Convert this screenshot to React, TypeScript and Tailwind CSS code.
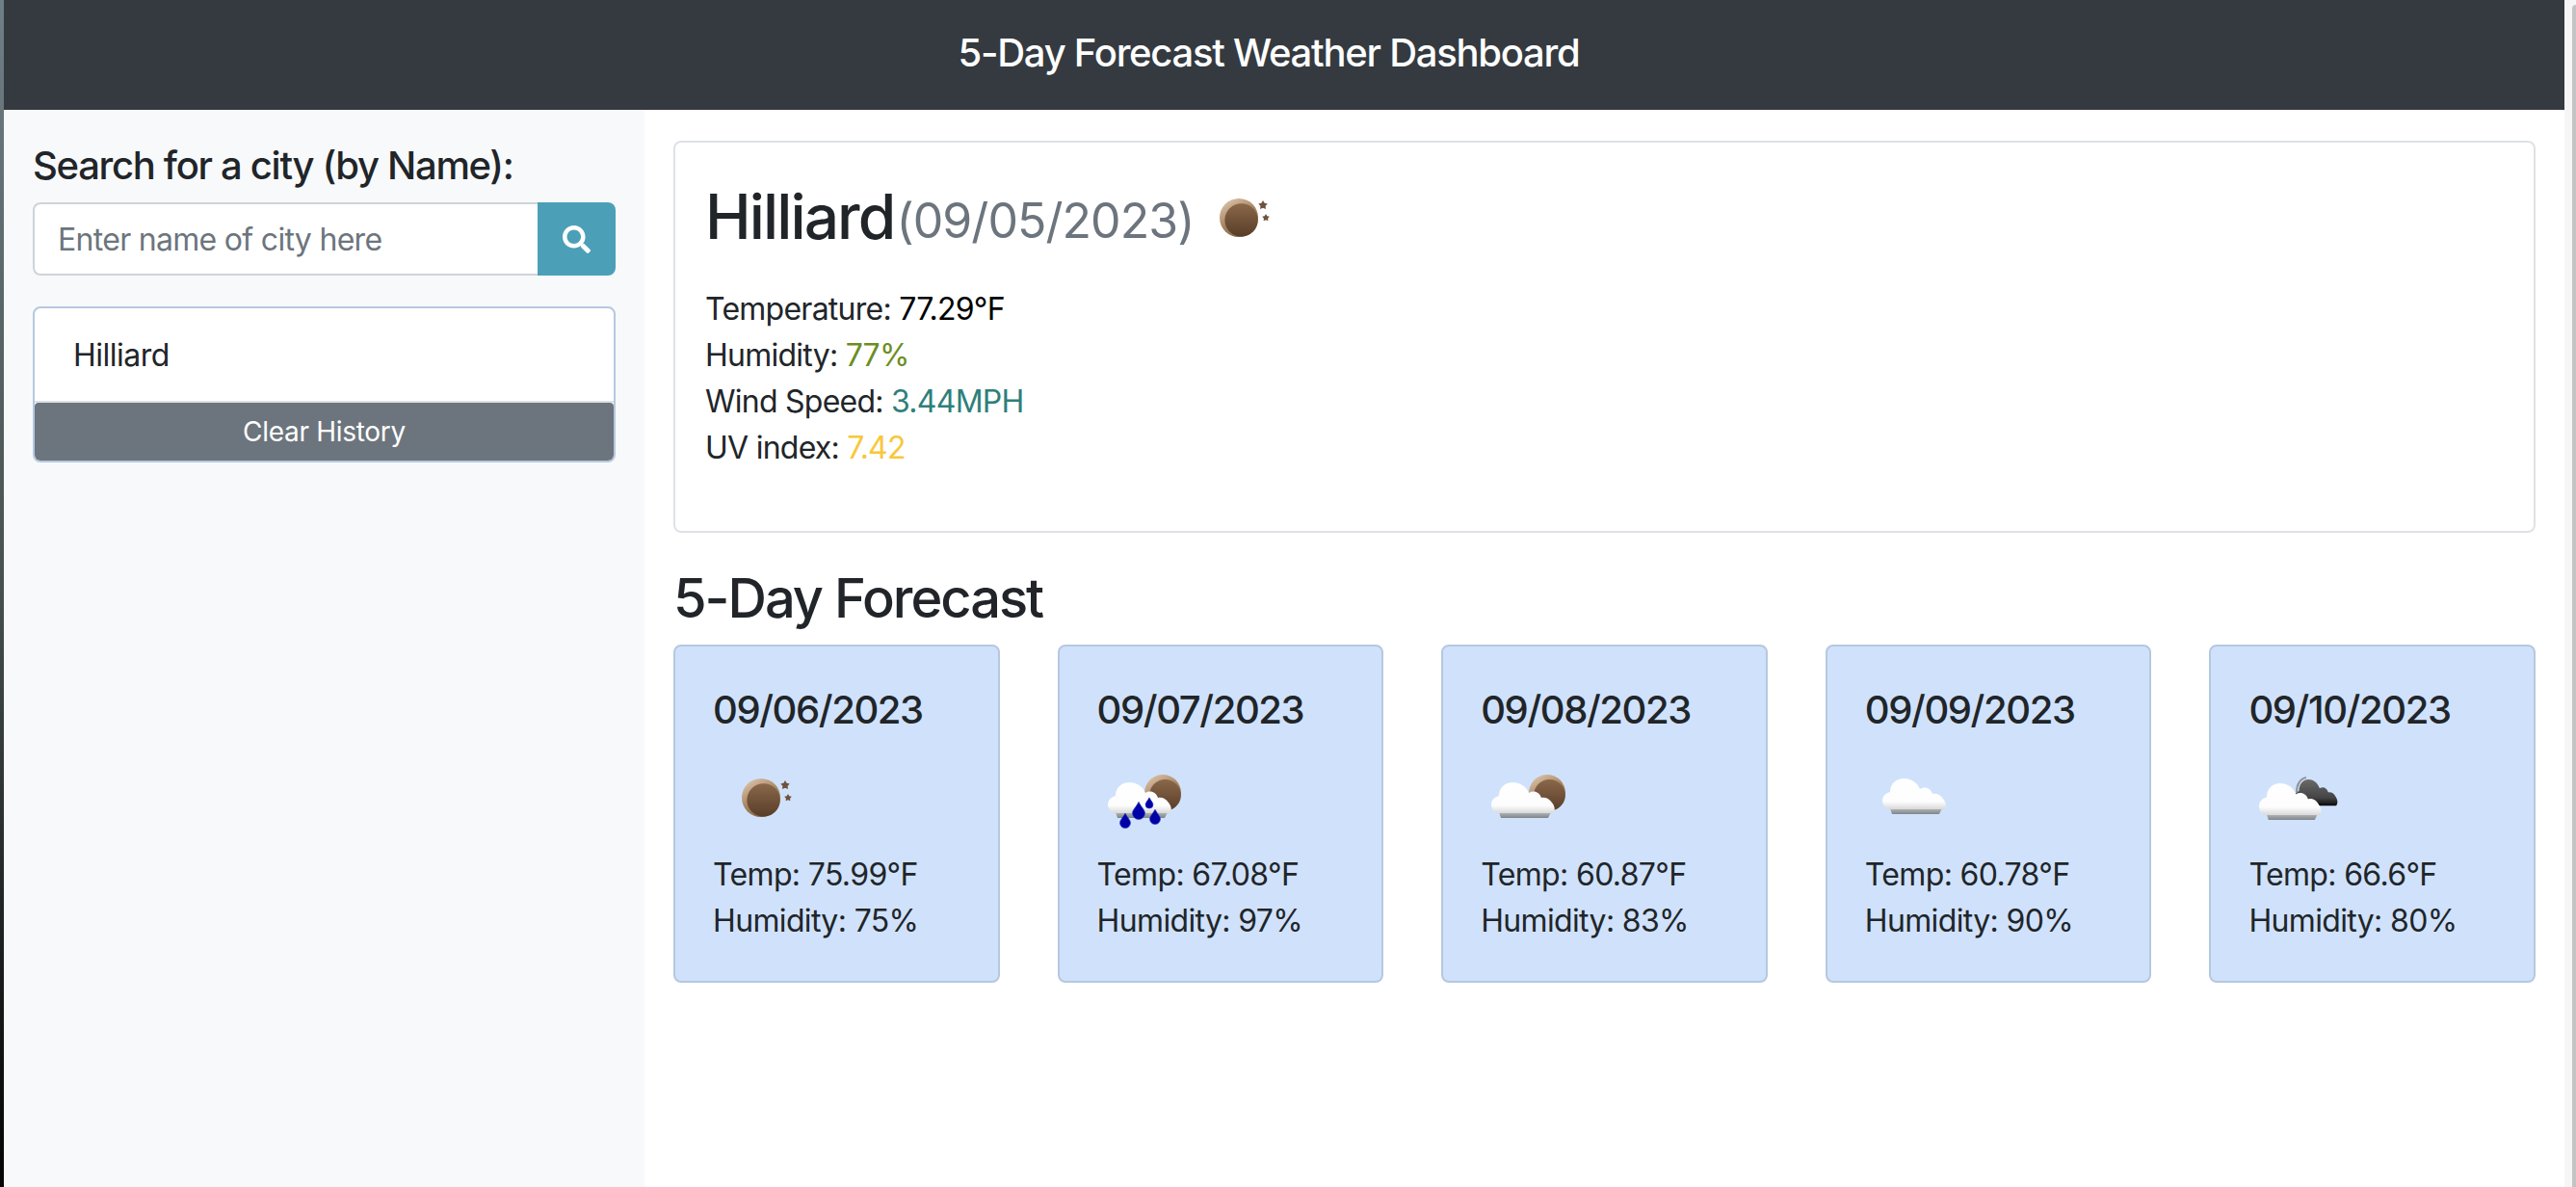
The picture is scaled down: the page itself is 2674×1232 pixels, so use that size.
import { FaSearch } from 'react-icons/fa';

const forecast = [
  { date: '09/06/2023', icon: 'clear', temp: '75.99', humidity: '75' },
  { date: '09/07/2023', icon: 'rain', temp: '67.08', humidity: '97' },
  { date: '09/08/2023', icon: 'few', temp: '60.87', humidity: '83' },
  { date: '09/09/2023', icon: 'cloud', temp: '60.78', humidity: '90' },
  { date: '09/10/2023', icon: 'broken', temp: '66.6', humidity: '80' },
];

function WeatherDefs() {
  return (
    <svg className="absolute w-0 h-0">
      <defs>
        <linearGradient id="moonRim" x1="0.2" y1="0" x2="0.8" y2="1">
          <stop offset="0" stopColor="#dcc3aa" />
          <stop offset="0.5" stopColor="#a5835f" />
          <stop offset="1" stopColor="#7a5e46" />
        </linearGradient>
        <linearGradient id="moonFace" x1="0" y1="0" x2="0" y2="1">
          <stop offset="0" stopColor="#8a684a" />
          <stop offset="1" stopColor="#583d28" />
        </linearGradient>
        <linearGradient id="cloudBody" x1="0" y1="0" x2="0" y2="1">
          <stop offset="0" stopColor="#ffffff" />
          <stop offset="0.75" stopColor="#fdfdfd" />
          <stop offset="1" stopColor="#d8d8d8" />
        </linearGradient>
        <linearGradient id="cloudShade" x1="0" y1="0" x2="0" y2="1">
          <stop offset="0" stopColor="#b4b8bb" />
          <stop offset="1" stopColor="#80858a" />
        </linearGradient>
        <linearGradient id="cloudDark" x1="0" y1="0" x2="0" y2="1">
          <stop offset="0" stopColor="#6a6a6a" />
          <stop offset="0.7" stopColor="#444444" />
          <stop offset="1" stopColor="#0c0c0c" />
        </linearGradient>
        <filter id="soft" x="-20%" y="-20%" width="140%" height="140%">
          <feGaussianBlur stdDeviation="0.75" />
        </filter>
      </defs>
    </svg>
  );
}

function Moon({ x, y, r = 20 }: { x: number; y: number; r?: number }) {
  return (
    <g>
      <circle cx={x} cy={y} r={r} fill="url(#moonRim)" />
      <circle cx={x + r * 0.13} cy={y + r * 0.12} r={r * 0.86} fill="url(#moonFace)" />
    </g>
  );
}

function Star({ x, y, r }: { x: number; y: number; r: number }) {
  const points = Array.from({ length: 10 }, (_, i) => {
    const a = (Math.PI * i) / 5 - Math.PI / 2;
    const d = i % 2 === 0 ? r : r * 0.55;
    return `${x + d * Math.cos(a)},${y + d * Math.sin(a)}`;
  }).join(' ');
  return <polygon points={points} fill="#70513a" />;
}

const cloudPath =
  'M9 32C3 32 0 27 0 23C0 18 4 15 8 14C8 5 15 0 22 0C30 0 36 4 39 11C44 8 50 10 52 16C55 15 60 16 63 21C66 25 67 29 64 32Z';

function Cloud({ x, y, sx = 1, sy = 1, dark = false }: { x: number; y: number; sx?: number; sy?: number; dark?: boolean }) {
  return (
    <g transform={`translate(${x} ${y}) scale(${sx} ${sy})`}>
      {!dark && <path d="M8 31H62L59 37H10Z" fill="url(#cloudShade)" />}
      <path d={cloudPath} fill={dark ? 'url(#cloudDark)' : 'url(#cloudBody)'} />
    </g>
  );
}

function Drop({ x, y, r }: { x: number; y: number; r: number }) {
  return (
    <path
      d={`M${x} ${y - r * 1.8}C${x + r * 0.4} ${y - r} ${x + r} ${y - r * 0.5} ${x + r} ${y}A${r} ${r} 0 1 1 ${x - r} ${y}C${x - r} ${y - r * 0.5} ${x - r * 0.4} ${y - r} ${x} ${y - r * 1.8}Z`}
      fill="#0000a6"
      stroke="#2a3fc0"
      strokeWidth="0.6"
    />
  );
}

function WeatherIcon({ name }: { name: string }) {
  return (
    <svg viewBox="0 0 100 100" className="w-[100px] h-[100px] block">
      <g filter="url(#soft)">
        {name === 'clear' && (
          <>
            <Moon x={50} y={48} />
            <Star x={75} y={35} r={5} />
            <Star x={78} y={48} r={4} />
          </>
        )}
        {name === 'rain' && (
          <>
            <Moon x={68} y={43} r={19} />
            <Cloud x={11} y={32} />
            <Drop x={29} y={74} r={5.5} />
            <Drop x={43} y={64} r={6.5} />
            <Drop x={60} y={70} r={5.5} />
            <Drop x={54} y={55} r={4} />
          </>
        )}
        {name === 'few' && (
          <>
            <Moon x={69} y={43} r={19} />
            <Cloud x={11} y={32} />
          </>
        )}
        {name === 'cloud' && <Cloud x={18} y={28} />}
        {name === 'broken' && (
          <>
            <path d="M50 42C50 34 54 28 60 27" fill="none" stroke="#8f9398" strokeWidth="2" />
            <Cloud x={47} y={29} sx={0.69} sy={0.85} dark />
            <Cloud x={11} y={33} sx={0.98} sy={1.03} />
          </>
        )}
      </g>
    </svg>
  );
}

export default function App() {
  return (
    <div className="flex h-[1232px] overflow-hidden bg-white font-['Inter',sans-serif] text-[32px] leading-[48px] text-[#212529]">
      <WeatherDefs />
      <div className="w-[4px] shrink-0 bg-gradient-to-b from-[#6f7f86] via-[#46504f] to-[#050505]" />

      <div className="flex-1 flex flex-col min-w-0">
        <header className="h-[114px] shrink-0 bg-[#343a40] flex items-center justify-center pr-[32px] pb-[4px] text-white text-[40px] font-medium tracking-[-1.25px]">
          5-Day Forecast Weather Dashboard
        </header>

        <div className="flex flex-1">
          <aside className="w-[665px] shrink-0 bg-[#f8f9fa] px-[30px] pt-[34px]">
            <h5 className="text-[40px] leading-[48px] font-medium mb-[14px] tracking-[-1.3px] whitespace-nowrap">
              Search for a city (by Name):
            </h5>
            <div className="flex h-[76px]">
              <div className="flex-1 border-2 border-r-0 border-[#ced4da] bg-white rounded-l-[8px] pl-[24px] pt-[2px] flex items-center text-[#6c757d] tracking-[-0.7px]">
                Enter name of city here
              </div>
              <button className="w-[81px] bg-[#4ba0b8] rounded-r-[8px] flex items-center justify-center text-white">
                <FaSearch size={29} />
              </button>
            </div>
            <div className="mt-[32px] border-2 border-[#b6c8e0] rounded-[8px] overflow-hidden bg-white">
              <div className="h-[96px] pl-[40px] pt-[2px] flex items-center tracking-[-0.5px]">Hilliard</div>
              <div className="border-t-2 border-[#dee2e6]">
                <button className="w-full h-[60px] bg-[#6c757d] text-white text-[28px] flex items-center justify-center tracking-[-0.3px] rounded-[4px]">
                  Clear History
                </button>
              </div>
            </div>
          </aside>

          <main className="flex-1 pt-[32px] px-[30px] min-w-0">
            <section className="h-[407px] border-2 border-[#dee2e6] rounded-[8px] pl-[31px] pt-[37px]">
              <div className="flex items-center h-[77px]">
                <h2 className="text-[64px] leading-[77px] font-medium tracking-[-1.9px] pt-[2px]">Hilliard</h2>
                <span className="text-[50px] leading-[77px] text-[#6c757d] ml-[2px] tracking-[-0.95px] relative top-[6px]">(09/05/2023)</span>
                <div className="-ml-[3px] mt-[9px] w-[100px] h-[100px]">
                  <WeatherIcon name="clear" />
                </div>
              </div>
              <div className="mt-[35px] tracking-[-0.75px]">
                <p>
                  Temperature: <span className="text-black">77.29°F</span>
                </p>
                <p>
                  Humidity: <span className="text-[#6b8e23]">77%</span>
                </p>
                <p>
                  Wind Speed: <span className="text-[#2e7f7a]">3.44MPH</span>
                </p>
                <p>
                  UV index: <span className="text-[#f7c83c]">7.42</span>
                </p>
              </div>
            </section>

            <h3 className="mt-[35px] text-[56px] leading-[67px] font-medium tracking-[-2px]">5-Day Forecast</h3>

            <div className="mt-[14px] grid grid-cols-5 gap-x-[60px]">
              {forecast.map((day) => (
                <div
                  key={day.date}
                  className="h-[351px] bg-[#d0e2fb] border-2 border-[#b6c8e0] rounded-[8px] pl-[39px] pt-[42px]"
                >
                  <h5 className="text-[40px] leading-[48px] font-medium tracking-[-1.4px]">{day.date}</h5>
                  <div className="mt-[19px]">
                    <WeatherIcon name={day.icon} />
                  </div>
                  <div className="mt-[4px] tracking-[-0.65px]">
                    <p>Temp: {day.temp}°F</p>
                    <p>Humidity: {day.humidity}%</p>
                  </div>
                </div>
              ))}
            </div>
          </main>
        </div>
      </div>

      <div className="w-[12px] shrink-0 bg-[#f6f6f6] flex justify-end pt-[5px]">
        <div className="w-[4px] h-full bg-[#c4c4c4] rounded-tl-[4px]" />
      </div>
    </div>
  );
}
